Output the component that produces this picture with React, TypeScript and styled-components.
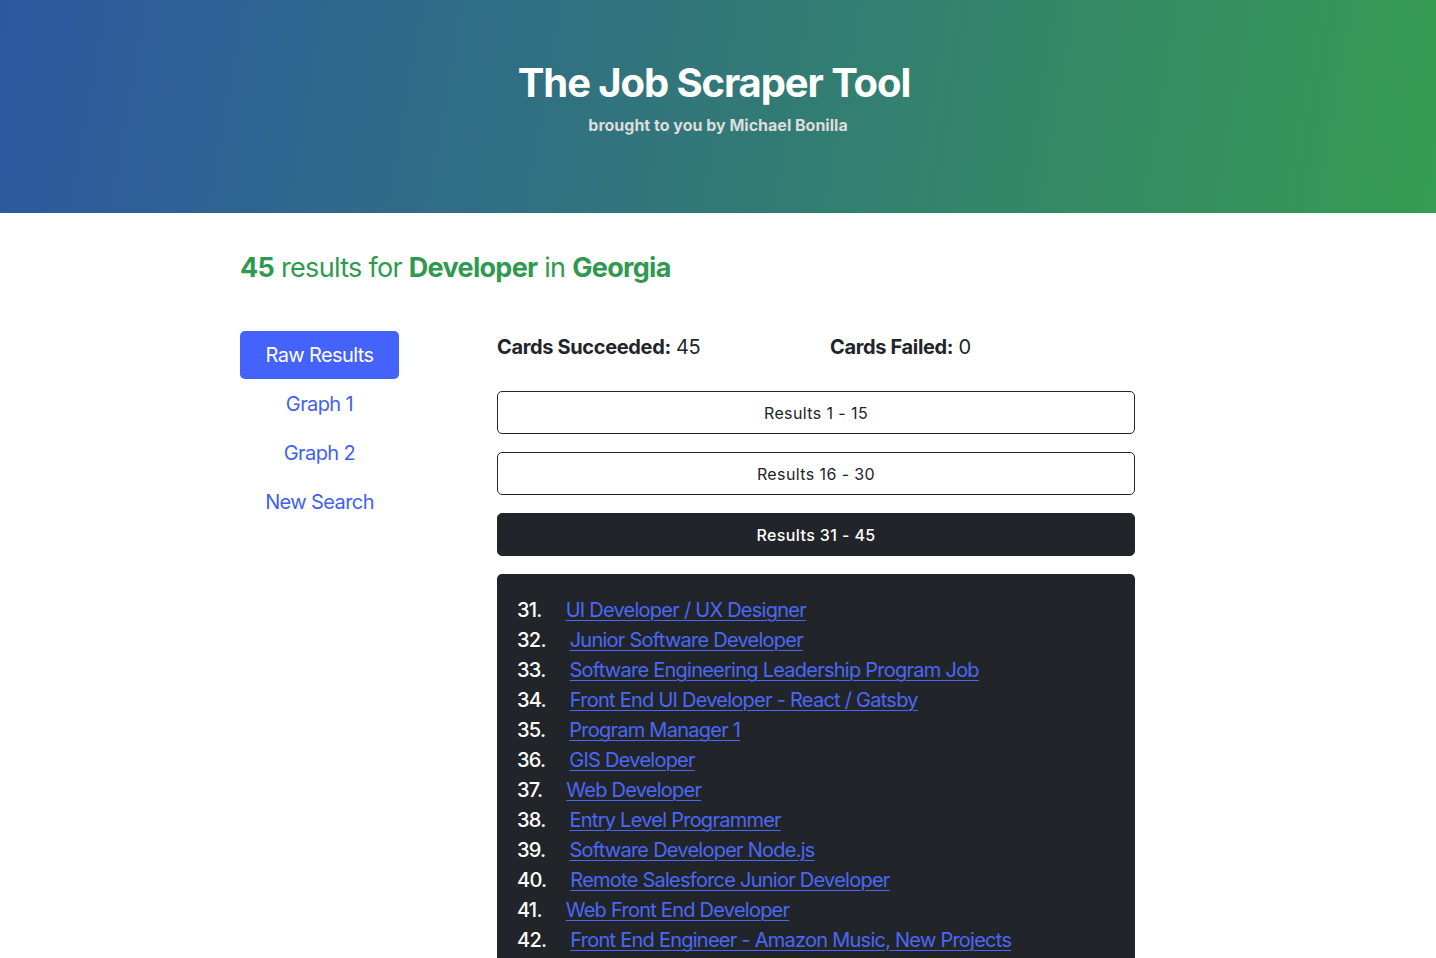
import React from "react";
import styled, { createGlobalStyle } from "styled-components";

const GlobalStyle = createGlobalStyle`
  html, body { margin: 0; padding: 0; background: #fff; }
  body { font-family: Inter, "Noto Sans", "Liberation Sans", sans-serif; color: #212529; }
  * { box-sizing: border-box; }
`;

const Header = styled.header`
  height: 213px;
  background: linear-gradient(100deg, #2c58a1 0%, #327878 50%, #359c52 100%);
  display: flex;
  flex-direction: column;
  align-items: center;
  padding-top: 58px;
`;

const Title = styled.h1`
  margin: 0;
  padding-right: 8px;
  color: #fff;
  font-size: 40px;
  font-weight: 700;
  letter-spacing: -1.1px;
  line-height: 50px;
`;

const Subtitle = styled.p`
  margin: 7px 0 0;
  color: #dcdcdc;
  font-size: 16px;
  font-weight: 700;
  line-height: 20px;
`;

const Main = styled.main`
  width: 956px;
  margin: 0 auto;
  padding-top: 38px;
`;

const Summary = styled.h2`
  margin: 0;
  color: #2f9a4f;
  font-size: 27px;
  font-weight: 400;
  line-height: 34px;
  letter-spacing: -0.7px;
  b { font-weight: 700; }
`;

const Columns = styled.div`
  display: flex;
  margin-top: 46px;
  gap: 98px;
`;

const Side = styled.nav`
  width: 159px;
  display: flex;
  flex-direction: column;
  align-items: stretch;
`;

const SideButton = styled.button<{ $active?: boolean }>`
  height: ${(p) => (p.$active ? "48px" : "49px")};
  border: none;
  border-radius: 5px;
  background: ${(p) => (p.$active ? "#4462fc" : "transparent")};
  color: ${(p) => (p.$active ? "#fff" : "#3f5ff5")};
  font-family: inherit;
  font-size: 20px;
  font-weight: 400;
  letter-spacing: -0.6px;
  text-align: center;
  cursor: pointer;
  padding: 0;
`;

const Content = styled.section`
  width: 638px;
  display: flex;
  flex-direction: column;
`;

const Stats = styled.div`
  display: flex;
  height: 32px;
  align-items: center;
  margin-bottom: 28px;
  font-size: 20px;
  letter-spacing: -0.35px;
  b { font-weight: 700; }
`;

const Stat = styled.span<{ $w?: number }>`
  width: ${(p) => (p.$w ? `${p.$w}px` : "auto")};
`;

const RangeButton = styled.button<{ $active?: boolean }>`
  height: 43px;
  margin-bottom: 18px;
  border: 1px solid #212529;
  border-radius: 5px;
  background: ${(p) => (p.$active ? "#212529" : "#fff")};
  color: ${(p) => (p.$active ? "#fff" : "#212529")};
  font-family: inherit;
  font-size: 16px;
  font-weight: ${(p) => (p.$active ? 500 : 400)};
  letter-spacing: 0.4px;
  cursor: pointer;
`;

const ListBox = styled.div`
  background: #212529;
  border-radius: 5px;
  padding: 21px 20px 20px;
`;

const Item = styled.div`
  font-size: 20px;
  line-height: 30px;
  color: #fff;
  letter-spacing: -0.75px;
`;

const Num = styled.span`
  font-weight: 500;
  margin-right: 24px;
`;

const JobLink = styled.a`
  color: #4a68f5;
  text-decoration: underline;
  text-underline-offset: 3px;
  text-decoration-thickness: 1px;
`;

const jobs = [
  "UI Developer / UX Designer",
  "Junior Software Developer",
  "Software Engineering Leadership Program Job",
  "Front End UI Developer - React / Gatsby",
  "Program Manager 1",
  "GIS Developer",
  "Web Developer",
  "Entry Level Programmer",
  "Software Developer Node.js",
  "Remote Salesforce Junior Developer",
  "Web Front End Developer",
  "Front End Engineer - Amazon Music, New Projects",
  "Software Engineer",
  "Junior Web Developer",
  "Full Stack Developer",
];

export default function App() {
  return (
    <>
      <GlobalStyle />
      <Header>
        <Title>The Job Scraper Tool</Title>
        <Subtitle>brought to you by Michael Bonilla</Subtitle>
      </Header>
      <Main>
        <Summary>
          <b>45</b> results for <b>Developer</b> in <b>Georgia</b>
        </Summary>
        <Columns>
          <Side>
            <SideButton $active>Raw Results</SideButton>
            <SideButton>Graph 1</SideButton>
            <SideButton>Graph 2</SideButton>
            <SideButton>New Search</SideButton>
          </Side>
          <Content>
            <Stats>
              <Stat $w={333}>
                <b>Cards Succeeded:</b> 45
              </Stat>
              <Stat>
                <b>Cards Failed:</b> 0
              </Stat>
            </Stats>
            <RangeButton>Results 1 - 15</RangeButton>
            <RangeButton>Results 16 - 30</RangeButton>
            <RangeButton $active>Results 31 - 45</RangeButton>
            <ListBox>
              {jobs.map((j, i) => (
                <Item key={i}>
                  <Num>{31 + i}.</Num>
                  <JobLink href="#">{j}</JobLink>
                </Item>
              ))}
            </ListBox>
          </Content>
        </Columns>
      </Main>
    </>
  );
}
